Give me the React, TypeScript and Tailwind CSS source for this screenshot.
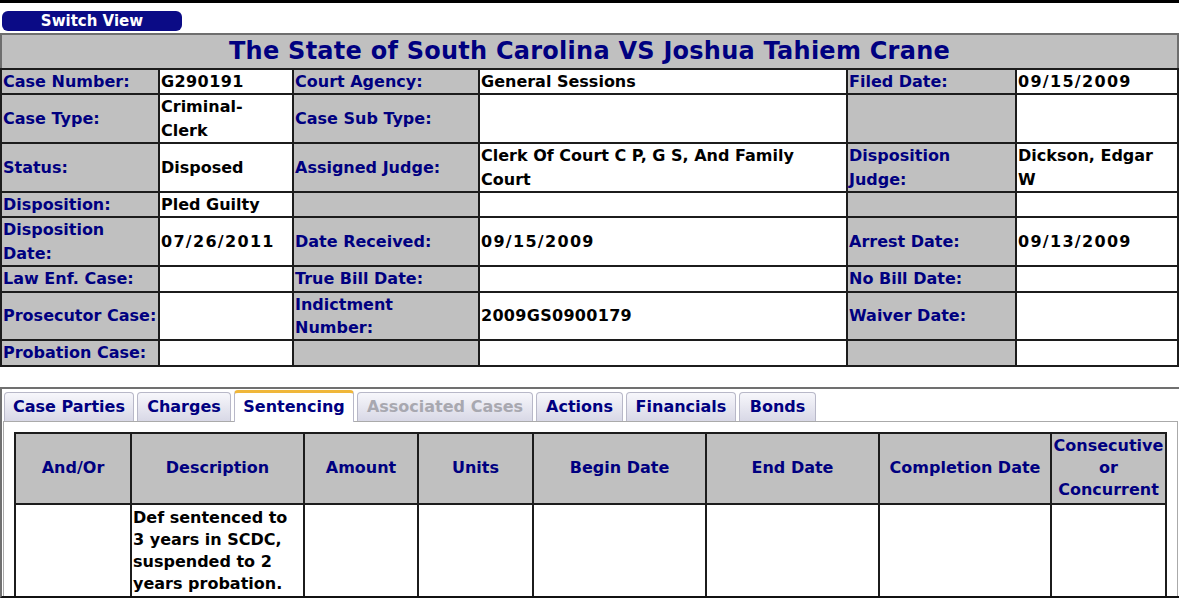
import React from "react";

const L = "bg-[#c0c0c0] text-[#000080] border-2 border-[#1c1c1c] px-[1px] py-0 align-middle whitespace-nowrap";
const V = "bg-white text-black border-2 border-[#1c1c1c] px-[1px] py-0 align-middle whitespace-nowrap";

type C = React.ReactNode;

function D({ children }: { children: React.ReactNode }) {
  return <span className="tracking-[1.3px]">{children}</span>;
}

function Row({ cells }: { cells: [C, C, C, C, C, C] }) {
  return (
    <tr>
      {cells.map((c, i) => (
        <td key={i} className={i % 2 === 0 ? L : V}>
          {c}
        </td>
      ))}
    </tr>
  );
}

const tabs: { name: string; w: string; active?: boolean; disabled?: boolean }[] = [
  { name: "Case Parties", w: "w-[130px]" },
  { name: "Charges", w: "w-[94px]" },
  { name: "Sentencing", w: "w-[120px]", active: true },
  { name: "Associated Cases", w: "w-[176px]", disabled: true },
  { name: "Actions", w: "w-[87px]" },
  { name: "Financials", w: "w-[110px]" },
  { name: "Bonds", w: "w-[77px]" },
];

export default function App() {
  const font = { fontFamily: '"DejaVu Sans", Verdana, sans-serif' };
  return (
    <div className="w-[1179px] bg-white font-bold" style={font}>
      <div className="h-[3px] bg-black" />
      <div className="mt-[8px] ml-[2px] flex h-[20px] w-[180px] items-center justify-center rounded-[6px] bg-[#0b0b86] text-[15px] leading-none text-white">
        Switch View
      </div>
      <table className="mt-[2px] w-[1177px] table-fixed border-collapse text-[16px] leading-[23.4px]">
        <colgroup>
          <col className="w-[158px]" />
          <col className="w-[134px]" />
          <col className="w-[186px]" />
          <col className="w-[368px]" />
          <col className="w-[169px]" />
          <col className="w-[162px]" />
        </colgroup>
        <tbody>
          <tr>
            <td colSpan={6} className="h-[35px] border-2 border-[#6e6e6e] border-b-[#1c1c1c] bg-[#c0c0c0] p-0 text-center text-[24px] leading-[31px] tracking-[0.25px] text-[#000080]">
              The State of South Carolina VS Joshua Tahiem Crane
            </td>
          </tr>
          <Row cells={["Case Number:", <span className="tracking-[0.4px]">G290191</span>, "Court Agency:", "General Sessions", "Filed Date:", <D>09/15/2009</D>]} />
          <Row cells={["Case Type:", <>Criminal-<br />Clerk</>, "Case Sub Type:", "", "", ""]} />
          <Row
            cells={[
              "Status:",
              "Disposed",
              "Assigned Judge:",
              <>Clerk Of Court C P, G S, And Family<br />Court</>,
              <>Disposition<br />Judge:</>,
              <>Dickson, Edgar<br />W</>,
            ]}
          />
          <Row cells={["Disposition:", "Pled Guilty", "", "", "", ""]} />
          <Row cells={[<>Disposition<br />Date:</>, <D>07/26/2011</D>, "Date Received:", <D>09/15/2009</D>, "Arrest Date:", <D>09/13/2009</D>]} />
          <Row cells={["Law Enf. Case:", "", "True Bill Date:", "", "No Bill Date:", ""]} />
          <Row cells={["Prosecutor Case:", "", <>Indictment<br />Number:</>, <span className="tracking-[0.3px]">2009GS0900179</span>, "Waiver Date:", ""]} />
          <Row cells={["Probation Case:", "", "", "", "", ""]} />
        </tbody>
      </table>

      <div className="mt-[20px] h-[211px] overflow-hidden border-t-2 border-l-2 border-b-2 border-[#707070] border-b-[#111] pl-[1px] pt-[1px]">
        <div className="flex items-end gap-[3px] pl-[1px]">
          {tabs.map((t) => (
            <div
              key={t.name}
              className={
                t.active
                  ? "relative z-10 -mb-[1px] flex h-[32px] items-center justify-center whitespace-nowrap rounded-t-[4px] border border-b-0 border-t-[3px] border-[#b8b8c8] border-t-[#f0b73a] bg-white text-[16px] text-[#000080] " + t.w
                  : "flex h-[29px] items-center justify-center whitespace-nowrap rounded-t-[4px] border border-b-0 border-[#b8b8c8] bg-gradient-to-b from-[#f7f7fb] to-[#d8d8e6] text-[16px] " +
                    (t.disabled ? "text-[#a8a8b0] " : "text-[#000080] ") + t.w
              }
            >
              {t.name}
            </div>
          ))}
        </div>
        <div className="mr-[1px] h-[220px] border border-[#aaaaaa] bg-white pl-[10px] pt-[10px]">
          <table className="w-[1151px] table-fixed border-collapse text-[16px] leading-[22px]">
            <colgroup>
              <col className="w-[116px]" />
              <col className="w-[173px]" />
              <col className="w-[114px]" />
              <col className="w-[115px]" />
              <col className="w-[173px]" />
              <col className="w-[173px]" />
              <col className="w-[172px]" />
              <col className="w-[115px]" />
            </colgroup>
            <thead>
              <tr className="h-[71px]">
                {["And/Or", "Description", "Amount", "Units", "Begin Date", "End Date", "Completion Date", "Consecutive or Concurrent"].map((h) => (
                  <th key={h} className="border-2 border-[#1c1c1c] bg-[#c0c0c0] p-0 text-center align-middle text-[#000080]">
                    {h}
                  </th>
                ))}
              </tr>
            </thead>
            <tbody>
              <tr>
                <td className="border-2 border-[#1c1c1c] p-0" />
                <td className="border-2 border-[#1c1c1c] px-[1px] pt-[2px] pb-[6px] align-top text-black">
                  Def sentenced to 3 years in SCDC, suspended to 2 years probation.
                </td>
                <td className="border-2 border-[#1c1c1c] p-0" />
                <td className="border-2 border-[#1c1c1c] p-0" />
                <td className="border-2 border-[#1c1c1c] p-0" />
                <td className="border-2 border-[#1c1c1c] p-0" />
                <td className="border-2 border-[#1c1c1c] p-0" />
                <td className="border-2 border-[#1c1c1c] p-0" />
              </tr>
            </tbody>
          </table>
        </div>
      </div>
    </div>
  );
}
